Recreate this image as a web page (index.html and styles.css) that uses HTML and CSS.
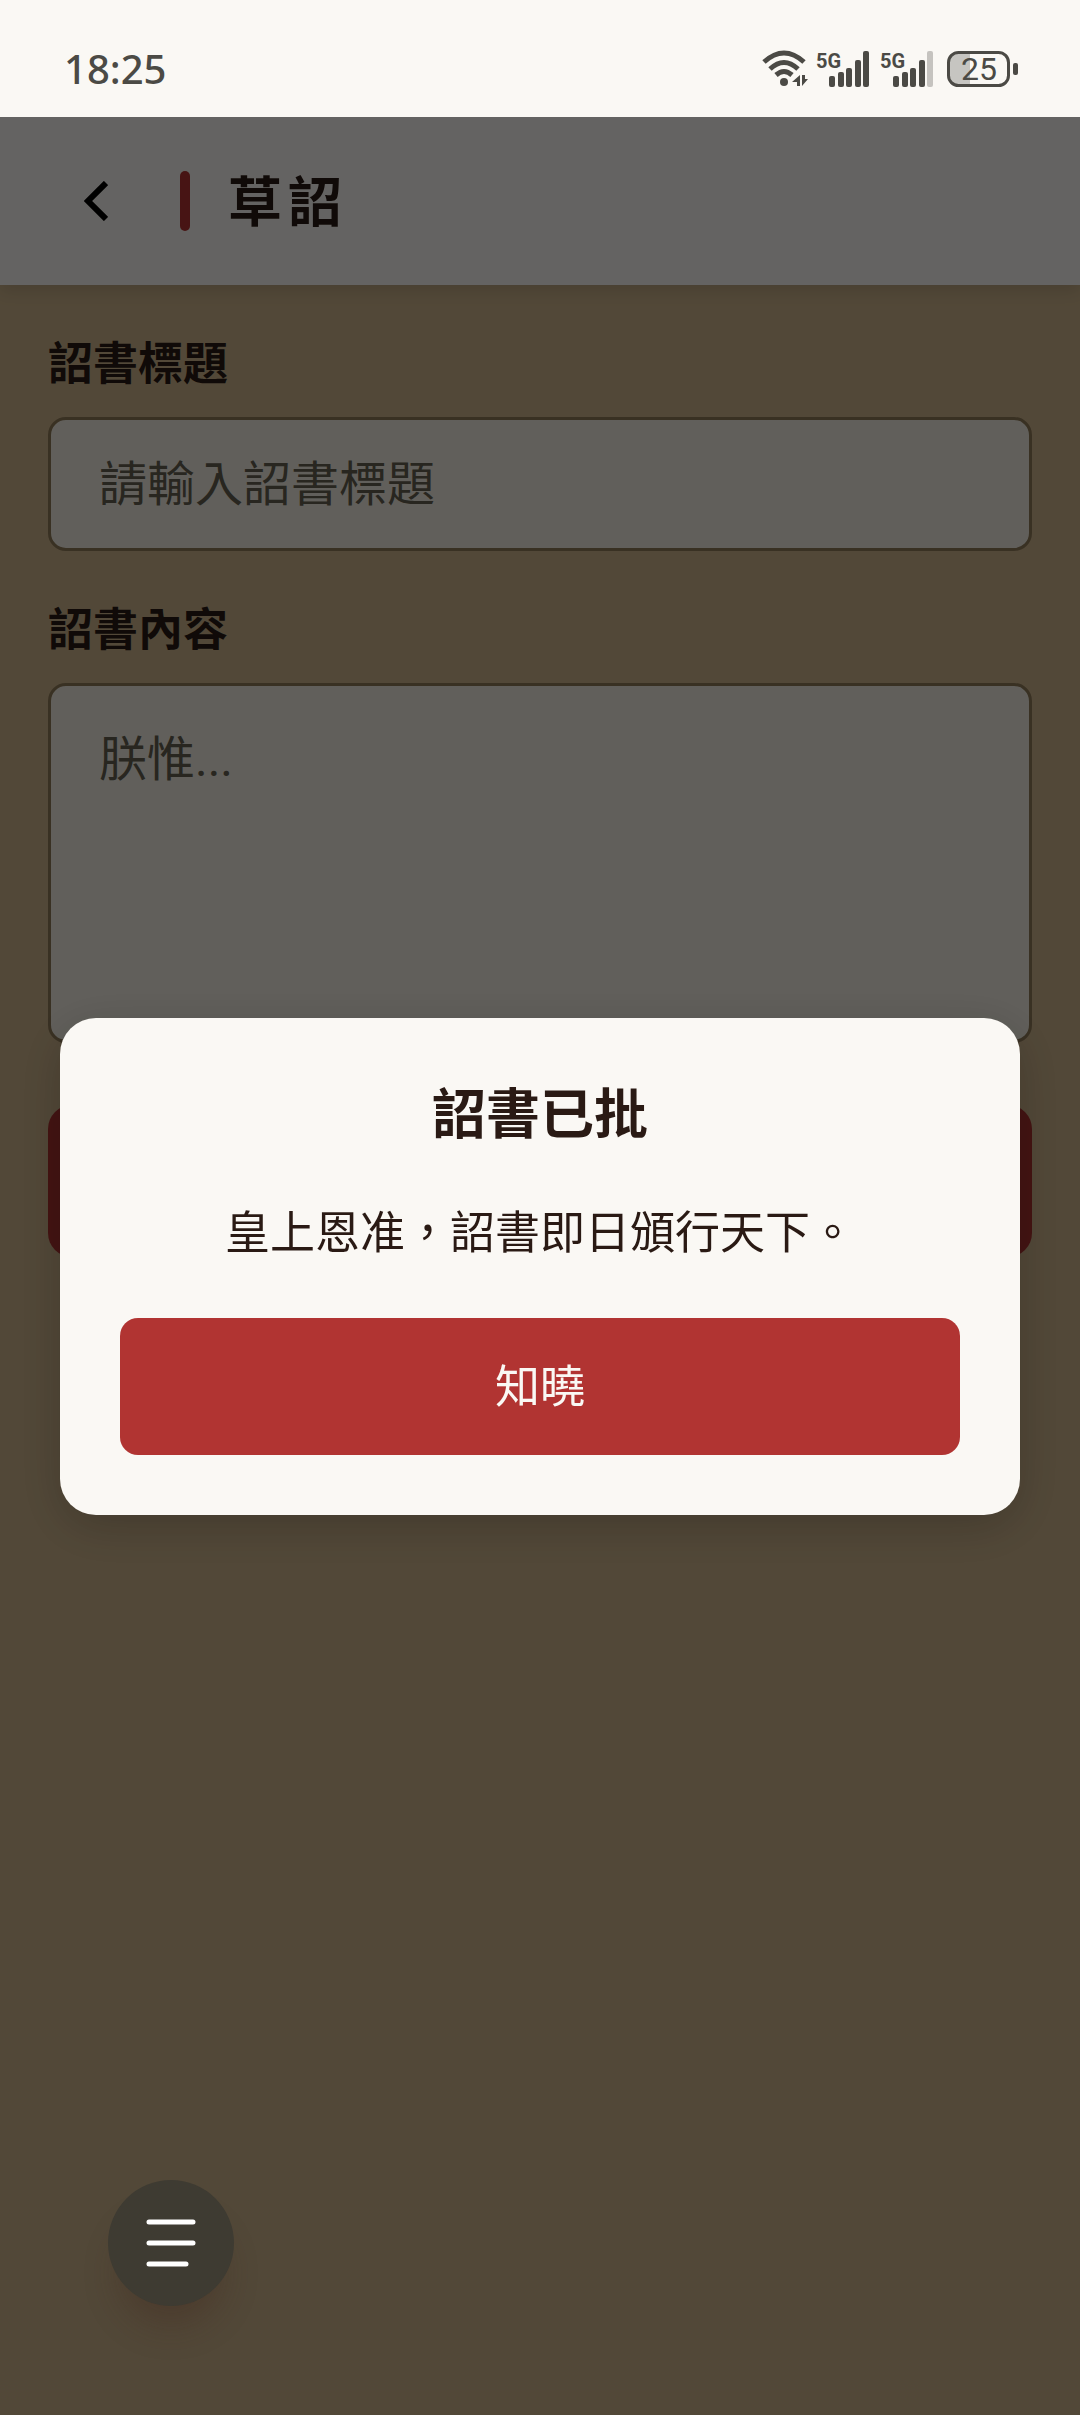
FILE: index.html
```html
<!DOCTYPE html>
<html lang="zh-Hant">
<head>
<meta charset="utf-8">
<meta name="viewport" content="width=device-width, initial-scale=1">
<title>草詔</title>
<link rel="stylesheet" href="styles.css">
</head>
<body>
<div class="status">
  <span class="status-time">18:25</span>
  <div class="status-icons">
    <svg width="47" height="40" viewBox="0 0 47 40" aria-hidden="true">
      <g fill="none" stroke="currentColor" stroke-width="5">
        <path d="M3 13Q23-5 43 13"/>
        <path d="M9 20Q23 7 37 20"/>
        <path d="M15 26Q23 19 31 26"/>
      </g>
      <circle cx="23" cy="33" r="4" fill="currentColor"/>
      <path d="M39 26V37H36V33H31ZM41 26V37L47 30H44V26Z" fill="currentColor"/>
    </svg>
    <svg width="56" height="40" viewBox="0 0 56 40" aria-hidden="true">
      <text class="network" x="0" y="19">5G</text>
      <g fill="currentColor">
        <rect x="13" y="27" width="6" height="11" rx="2"/>
        <rect x="22" y="23" width="6" height="15" rx="2"/>
        <rect x="30" y="19" width="6" height="19" rx="2"/>
        <rect x="39" y="11" width="6" height="27" rx="2"/>
        <rect x="47" y="2" width="6" height="36" rx="2"/>
      </g>
    </svg>
    <svg width="56" height="40" viewBox="0 0 56 40" aria-hidden="true">
      <text class="network" x="0" y="19">5G</text>
      <g fill="currentColor">
        <rect x="13" y="27" width="6" height="11" rx="2"/>
        <rect x="22" y="23" width="6" height="15" rx="2"/>
        <rect x="30" y="19" width="6" height="19" rx="2"/>
        <rect x="39" y="11" width="6" height="27" rx="2"/>
        <rect x="47" y="2" width="6" height="36" rx="2" opacity=".3"/>
      </g>
    </svg>
    <svg class="battery" width="72" height="40" viewBox="0 0 72 40" aria-hidden="true">
      <path d="M23 4H12Q3 4 3 13V27Q3 36 12 36H23Z" fill="#c6c5c1"/>
      <rect x="1.500" y="3.500" width="60" height="33" rx="10" fill="none" stroke="currentColor" stroke-width="3"/>
      <rect x="66" y="14" width="5" height="12" rx="2" fill="currentColor"/>
      <text class="charge" x="32" y="31" text-anchor="middle">25</text>
    </svg>
  </div>
</div>

<header class="topbar">
  <button class="back" type="button" aria-label="返回">
    <svg width="24" height="40" viewBox="0 0 24 40" aria-hidden="true"><path d="M22 2L4 20L22 38" fill="none" stroke="#000" stroke-width="6"/></svg>
  </button>
  <span class="accent"></span>
  <h1 class="page-title">草詔</h1>
</header>

<form class="form">
  <label class="label" for="title">詔書標題</label>
  <input class="field" id="title" type="text" placeholder="請輸入詔書標題">
  <label class="label" for="content">詔書內容</label>
  <textarea class="field field-area" id="content" placeholder="朕惟..."></textarea>
  <button class="submit" type="button" aria-label="頒詔"></button>
</form>

<div class="overlay">
  <section class="dialog" role="dialog" aria-modal="true" aria-labelledby="dialog-title">
    <h2 class="dialog-title" id="dialog-title">詔書已批</h2>
    <p class="dialog-text">皇上恩准，詔書即日頒行天下。</p>
    <button class="confirm" type="button">知曉</button>
  </section>
</div>

<button class="menu" type="button" aria-label="選單">
  <svg width="50" height="48" viewBox="0 0 50 48" aria-hidden="true"><path d="M3 3H47M3 24H47M3 45H40" stroke="#fff" stroke-width="5" stroke-linecap="round"/></svg>
</button>
</body>
</html>
```
FILE: styles.css
```css
* {
  box-sizing: border-box;
  margin: 0;
}

:root {
  --paper: #faf8f4;
  --ink: #2a1a14;
  --red: #b13432;
  --status-height: 117px;
}

body {
  min-height: 100vh;
  background: #cdb48c;
  color: var(--ink);
  font-family: Roboto, "Noto Sans CJK TC", sans-serif;
}

button,
input,
textarea {
  border: 0;
  font-family: inherit;
}

.status {
  position: relative;
  z-index: 1;
  display: flex;
  align-items: center;
  justify-content: space-between;
  height: var(--status-height);
  padding: 20px 61px 0 64px;
  background: var(--paper);
  color: #4b4a45;
}

.status-time {
  font: 500 40px/40px "Noto Sans", sans-serif;
}

.status-icons {
  display: flex;
  gap: 8px;
}

.battery {
  margin-left: 3px;
}

.network {
  fill: currentColor;
  font: 700 20px Roboto, sans-serif;
}

.charge {
  fill: currentColor;
  font: 400 32px Roboto, sans-serif;
}

.topbar {
  display: flex;
  align-items: center;
  height: 168px;
  padding: 0 48px;
  background: var(--paper);
  box-shadow: 0 6px 16px rgba(0, 0, 0, 0.12);
}

.back {
  display: flex;
  align-items: center;
  justify-content: center;
  width: 96px;
  height: 96px;
  padding: 0;
  background: none;
}

.accent {
  width: 10px;
  height: 60px;
  margin: 0 38px 0 36px;
  border-radius: 5px;
  background: var(--red);
}

.page-title {
  padding-top: 6px;
  font-size: 54px;
  line-height: 72px;
  letter-spacing: 6px;
}

.form {
  display: flex;
  flex-direction: column;
  padding: 50px 48px 48px;
}

.label {
  margin-bottom: 22px;
  font-size: 45px;
  font-weight: 700;
  line-height: 60px;
}

.field {
  width: 100%;
  margin-bottom: 50px;
  padding: 32px 48px;
  border: 3px solid #8f7a58;
  border-radius: 18px;
  background: #f2eee3;
  color: var(--ink);
  font-size: 48px;
  line-height: 64px;
}

.field[type="text"] {
  height: 134px;
}

.field-area {
  height: 360px;
  margin-bottom: 62px;
  padding: 42px 48px;
  resize: none;
}

.field::placeholder {
  color: #655f50;
  opacity: 1;
}

.submit {
  height: 152px;
  border-radius: 24px;
  background: #a9322f;
}

.overlay {
  position: fixed;
  inset: var(--status-height) 0 0;
  display: flex;
  align-items: center;
  justify-content: center;
  padding: 0 60px;
  background: rgba(0, 0, 0, 0.6);
}

.dialog {
  width: 100%;
  padding: 62px 60px 60px;
  border-radius: 36px;
  background: var(--paper);
  box-shadow: 0 12px 48px rgba(0, 0, 0, 0.2);
  text-align: center;
}

.dialog-title {
  margin-bottom: 46px;
  font-size: 54px;
  line-height: 72px;
}

.dialog-text {
  margin-bottom: 48px;
  font-size: 45px;
  line-height: 72px;
}

.confirm {
  display: block;
  width: 100%;
  height: 137px;
  padding: 4px 0 0;
  border-radius: 18px;
  background: var(--red);
  color: var(--paper);
  font-size: 45px;
  line-height: 72px;
}

.menu {
  position: fixed;
  bottom: 109px;
  left: 108px;
  display: flex;
  align-items: center;
  justify-content: center;
  width: 126px;
  height: 126px;
  padding: 0;
  border-radius: 50%;
  background: #3e3b32;
  box-shadow: 0 30px 36px -12px rgba(60, 30, 20, 0.3);
}
```
